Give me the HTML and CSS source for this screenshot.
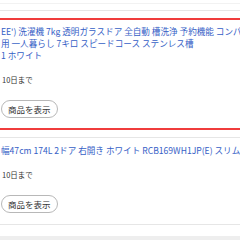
FILE: index.html
```html
<!DOCTYPE html>
<html>
<head>
    <title>商品一覧</title>
    <link rel="stylesheet" href="styles.css">
</head>
<body>
    <div class="list">
        <div class="card card-prev">
            <div class="rule"></div>
        </div>

        <div class="card card-active">
            <a class="title" href="#">EE') 洗濯機 7kg 透明ガラスドア 全自動 槽洗浄 予約機能 コンパクト<br>用 一人暮らし 7キロ スピードコース ステンレス槽<br>1 ホワイト</a>
            <div class="meta">10日まで</div>
            <button class="btn">商品を表示</button>
        </div>

        <div class="card">
            <a class="title" href="#">幅47cm 174L 2ドア 右開き ホワイト RCB169WH1JP(E) スリム</a>
            <div class="meta">10日まで</div>
            <button class="btn">商品を表示</button>
        </div>
    </div>
    <div class="footer"></div>
</body>
</html>
```

FILE: styles.css
```css
html, body {
    margin: 0;
    padding: 0;
    overflow: hidden;
    background: #fff;
    font-family: "Noto Sans CJK JP", "Noto Sans", sans-serif;
}
.list {
    display: flex;
    flex-direction: column;
    gap: 7px;
}
.card {
    margin: 0 -12px;
    padding: 6px 12px 11px;
    border: 1px solid #e6e6e6;
    overflow: hidden;
    display: flex;
    flex-direction: column;
    align-items: flex-start;
}
.card-prev {
    box-sizing: border-box;
    height: 11px;
    padding: 3px 0 0;
    border-top: 0;
    align-items: stretch;
}
.rule {
    border-top: 1px solid #f2f2f2;
}
.card-active {
    border: 2px solid #f03c3c;
    padding: 5px 11px 10px;
}
.title {
    color: #3560c6;
    text-decoration: none;
    font-size: 8.6px;
    line-height: 12px;
    white-space: nowrap;
}
.meta {
    margin-top: 13px;
    color: #333;
    font-size: 7.5px;
    line-height: 12px;
    padding-left: 1px;
}
.btn {
    margin-top: 14px;
    height: 18px;
    padding: 0 6px;
    border: 1px solid #b8b8b8;
    border-radius: 10px;
    background: #fff;
    color: #333;
    font-family: inherit;
    font-size: 8.5px;
    line-height: 16px;
}
.footer {
    margin-top: 11px;
    height: 20px;
    background: #eeeeee;
}
```
